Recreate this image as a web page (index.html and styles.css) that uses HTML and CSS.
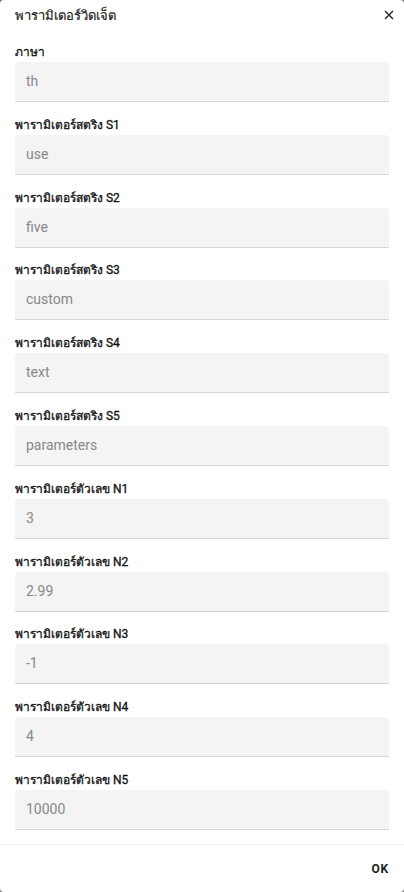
FILE: index.html
```html
<!DOCTYPE html>
<html lang="th">
<head>
    <meta charset="UTF-8">
    <title>พารามิเตอร์วิดเจ็ต</title>
    <meta name="viewport" content="width=device-width, initial-scale=1.0">
    <link rel="stylesheet" href="styles.css">
</head>
<body>
    <div class="dialog">
        <div class="dialog-header">
            <span class="dialog-title">พารามิเตอร์วิดเจ็ต</span>
            <button class="close-btn" aria-label="close">
                <svg width="10" height="10" viewBox="0 0 10 10">
                    <path d="M1 1L9 9M9 1L1 9" stroke="#222" stroke-width="1.4" fill="none"/>
                </svg>
            </button>
        </div>

        <div class="dialog-body">
            <div class="field">
                <label>ภาษา</label>
                <div class="input">th</div>
            </div>
            <div class="field">
                <label>พารามิเตอร์สตริง S1</label>
                <div class="input">use</div>
            </div>
            <div class="field">
                <label>พารามิเตอร์สตริง S2</label>
                <div class="input">five</div>
            </div>
            <div class="field">
                <label>พารามิเตอร์สตริง S3</label>
                <div class="input">custom</div>
            </div>
            <div class="field">
                <label>พารามิเตอร์สตริง S4</label>
                <div class="input">text</div>
            </div>
            <div class="field">
                <label>พารามิเตอร์สตริง S5</label>
                <div class="input">parameters</div>
            </div>
            <div class="field">
                <label>พารามิเตอร์ตัวเลข N1</label>
                <div class="input">3</div>
            </div>
            <div class="field">
                <label>พารามิเตอร์ตัวเลข N2</label>
                <div class="input">2.99</div>
            </div>
            <div class="field">
                <label>พารามิเตอร์ตัวเลข N3</label>
                <div class="input">-1</div>
            </div>
            <div class="field">
                <label>พารามิเตอร์ตัวเลข N4</label>
                <div class="input">4</div>
            </div>
            <div class="field">
                <label>พารามิเตอร์ตัวเลข N5</label>
                <div class="input">10000</div>
            </div>
        </div>

        <div class="dialog-footer">
            <button class="ok-btn">OK</button>
        </div>
    </div>
</body>
</html>
```

FILE: styles.css
```css
html { background: #777; }
body { margin: 0; font-family: Roboto, "Noto Sans", "DejaVu Sans", sans-serif; color: #222; }

.dialog {
    background: #fff;
    height: 892px;
    border-radius: 4px;
    display: flex;
    flex-direction: column;
    overflow: hidden;
}

.dialog-header {
    display: flex;
    align-items: center;
    justify-content: space-between;
    height: 30px;
    padding: 0 15px;
}
.dialog-title { font-size: 13px; -webkit-text-stroke: 0.2px #222; }
.close-btn {
    border: none;
    background: none;
    padding: 0;
    width: 10px;
    height: 10px;
    display: flex;
    margin-right: -5px;
}

.dialog-body {
    flex: 1;
    padding: 12px 15px 0;
}

.field { margin-bottom: 12.8px; }
.field label {
    display: block;
    font-size: 12px;
    line-height: 20px;
    color: #111;
    -webkit-text-stroke: 0.3px #111;
}
.input {
    height: 39px;
    line-height: 39px;
    background: #f4f4f4;
    border-bottom: 1px solid #d6d6d6;
    border-radius: 4px 4px 0 0;
    padding: 0 11px;
    font-size: 14px;
    color: #888;
}

.dialog-footer {
    height: 47px;
    border-top: 1px solid #eee;
    display: flex;
    align-items: center;
    justify-content: flex-end;
    padding: 0 15px;
}
.ok-btn {
    border: none;
    background: none;
    font-family: Roboto, sans-serif;
    font-size: 12px;
    font-weight: 700;
    letter-spacing: 0.8px;
    color: #222;
    padding: 0;
}
```
